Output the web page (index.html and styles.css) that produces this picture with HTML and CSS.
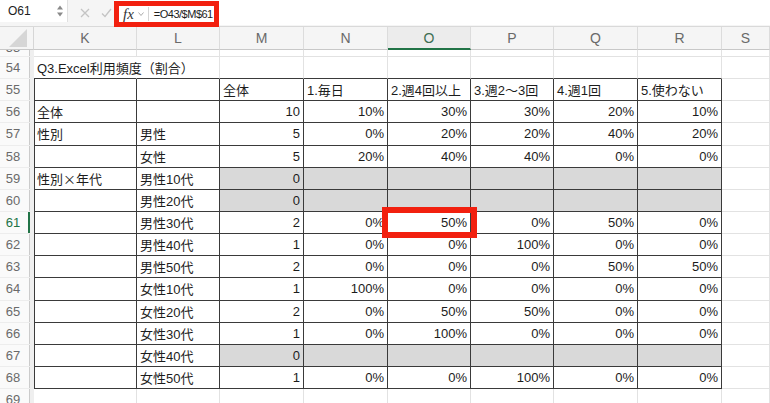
FILE: index.html
```html
<!DOCTYPE html>
<html lang="ja">
<head>
  <meta charset="UTF-8">
  <meta name="viewport" content="width=device-width, initial-scale=1.0">
  <title>Excel利用頻度</title>
  <link rel="stylesheet" href="styles.css">
</head>
<body>

<div class="bar">
  <div class="namebox">
    <span>O61</span>
    <svg class="spin" width="6" height="12" viewBox="0 0 6 12"><path d="M0 4.5 L3 0.5 L6 4.5 Z M0 7.5 L3 11.5 L6 7.5 Z" fill="#8a8a8a"/></svg>
  </div>
  <svg class="btn" width="10" height="10" viewBox="0 0 10 10"><path d="M1 1 L9 9 M9 1 L1 9" stroke="#c4c4c4" stroke-width="1.3"/></svg>
  <svg class="btn" width="11" height="10" viewBox="0 0 11 10"><path d="M1 5.5 L4 8.5 L10 1" stroke="#c4c4c4" stroke-width="1.3" fill="none"/></svg>
  <div class="formula">
    <div class="fx-box">
      <span class="fx">fx</span>
      <svg class="chev" width="6" height="4" viewBox="0 0 6 4"><path d="M0.5 0.5 L3 3.5 L5.5 0.5" stroke="#aaa" fill="none"/></svg>
      <span class="sep"></span>
      <span class="ftext">=O43/$M$61</span>
    </div>
  </div>
</div>

<div class="sheet">
  <!-- 列見出し -->
  <div class="corner"><svg width="18" height="18" viewBox="0 0 18 18"><path d="M18 0 L18 18 L0 18 Z" fill="#d6d6d6"/></svg></div>
  <div class="ch">K</div><div class="ch">L</div><div class="ch">M</div><div class="ch">N</div>
  <div class="ch sel">O</div><div class="ch">P</div><div class="ch">Q</div><div class="ch">R</div><div class="ch">S</div>

  <!-- 53 (半分隠れ) -->
  <div class="rh cut"><span>53</span></div>
  <div class="c"></div><div class="c"></div><div class="c"></div><div class="c"></div><div class="c"></div>
  <div class="c"></div><div class="c"></div><div class="c"></div><div class="c"></div>

  <!-- 54 -->
  <div class="rh">54</div>
  <div class="c tt over">Q3.Excel利用頻度（割合）</div>
  <div class="c tt"></div><div class="c tt"></div><div class="c tt"></div><div class="c tt"></div>
  <div class="c tt"></div><div class="c tt"></div><div class="c tt"></div><div class="c"></div>

  <!-- 55 -->
  <div class="rh">55</div>
  <div class="c t tl"></div><div class="c t"></div><div class="c t">全体</div><div class="c t">1.毎日</div>
  <div class="c t">2.週4回以上</div><div class="c t">3.週2〜3回</div><div class="c t">4.週1回</div><div class="c t">5.使わない</div><div class="c"></div>

  <!-- 56 -->
  <div class="rh">56</div>
  <div class="c t tl">全体</div><div class="c t"></div><div class="c t n">10</div><div class="c t n">10%</div>
  <div class="c t n">30%</div><div class="c t n">30%</div><div class="c t n">20%</div><div class="c t n">10%</div><div class="c"></div>

  <!-- 57 -->
  <div class="rh">57</div>
  <div class="c t tl">性別</div><div class="c t">男性</div><div class="c t n">5</div><div class="c t n">0%</div>
  <div class="c t n">20%</div><div class="c t n">20%</div><div class="c t n">40%</div><div class="c t n">20%</div><div class="c"></div>

  <!-- 58 -->
  <div class="rh">58</div>
  <div class="c t tl"></div><div class="c t">女性</div><div class="c t n">5</div><div class="c t n">20%</div>
  <div class="c t n">40%</div><div class="c t n">40%</div><div class="c t n">0%</div><div class="c t n">0%</div><div class="c"></div>

  <!-- 59 -->
  <div class="rh">59</div>
  <div class="c t tl jp">性別×年代</div><div class="c t">男性10代</div><div class="c t n g">0</div><div class="c t g"></div>
  <div class="c t g"></div><div class="c t g"></div><div class="c t g"></div><div class="c t g"></div><div class="c"></div>

  <!-- 60 -->
  <div class="rh">60</div>
  <div class="c t tl"></div><div class="c t">男性20代</div><div class="c t n g">0</div><div class="c t g"></div>
  <div class="c t g"></div><div class="c t g"></div><div class="c t g"></div><div class="c t g"></div><div class="c"></div>

  <!-- 61 -->
  <div class="rh cur">61</div>
  <div class="c t tl"></div><div class="c t">男性30代</div><div class="c t n">2</div><div class="c t n">0%</div>
  <div class="c t n active">50%<span class="mark"></span></div><div class="c t n">0%</div><div class="c t n">50%</div><div class="c t n">0%</div><div class="c"></div>

  <!-- 62 -->
  <div class="rh">62</div>
  <div class="c t tl"></div><div class="c t">男性40代</div><div class="c t n">1</div><div class="c t n">0%</div>
  <div class="c t n">0%</div><div class="c t n">100%</div><div class="c t n">0%</div><div class="c t n">0%</div><div class="c"></div>

  <!-- 63 -->
  <div class="rh">63</div>
  <div class="c t tl"></div><div class="c t">男性50代</div><div class="c t n">2</div><div class="c t n">0%</div>
  <div class="c t n">0%</div><div class="c t n">0%</div><div class="c t n">50%</div><div class="c t n">50%</div><div class="c"></div>

  <!-- 64 -->
  <div class="rh">64</div>
  <div class="c t tl"></div><div class="c t">女性10代</div><div class="c t n">1</div><div class="c t n">100%</div>
  <div class="c t n">0%</div><div class="c t n">0%</div><div class="c t n">0%</div><div class="c t n">0%</div><div class="c"></div>

  <!-- 65 -->
  <div class="rh">65</div>
  <div class="c t tl"></div><div class="c t">女性20代</div><div class="c t n">2</div><div class="c t n">0%</div>
  <div class="c t n">50%</div><div class="c t n">50%</div><div class="c t n">0%</div><div class="c t n">0%</div><div class="c"></div>

  <!-- 66 -->
  <div class="rh">66</div>
  <div class="c t tl"></div><div class="c t">女性30代</div><div class="c t n">1</div><div class="c t n">0%</div>
  <div class="c t n">100%</div><div class="c t n">0%</div><div class="c t n">0%</div><div class="c t n">0%</div><div class="c"></div>

  <!-- 67 -->
  <div class="rh">67</div>
  <div class="c t tl"></div><div class="c t">女性40代</div><div class="c t n g">0</div><div class="c t g"></div>
  <div class="c t g"></div><div class="c t g"></div><div class="c t g"></div><div class="c t g"></div><div class="c"></div>

  <!-- 68 -->
  <div class="rh">68</div>
  <div class="c t tl"></div><div class="c t">女性50代</div><div class="c t n">1</div><div class="c t n">0%</div>
  <div class="c t n">0%</div><div class="c t n">100%</div><div class="c t n">0%</div><div class="c t n">0%</div><div class="c"></div>

  <!-- 69 -->
  <div class="rh">69</div>
  <div class="c"></div><div class="c"></div><div class="c"></div><div class="c"></div><div class="c"></div>
  <div class="c"></div><div class="c"></div><div class="c"></div><div class="c"></div>
</div>

</body>
</html>
```

FILE: styles.css
```css
body {
  margin: 0;
  font-family: "Liberation Sans", "Noto Sans CJK JP", sans-serif;
  background: #fff;
  color: #1c1c1c;
  overflow: hidden;
  height: 100vh;
}

/* 数式バー */
.bar {
  display: flex;
  align-items: center;
  height: 27px;
  background: #f5f5f5;
  border-bottom: 1px solid #d9d9d9;
  box-sizing: border-box;
}
.namebox {
  display: flex;
  align-items: center;
  justify-content: space-between;
  width: 68px;
  height: 22px;
  padding: 0 4px 0 8px;
  box-sizing: border-box;
  background: #fff;
  border-right: 1px solid #e0e0e0;
  font-size: 12px;
  align-self: flex-start;
}
.btn {
  margin-left: 12px;
}
.btn + .btn {
  margin-left: 11px;
}
.formula {
  flex: 1;
  display: flex;
  align-self: flex-start;
  height: 25px;
  margin-left: 2px;
  background: #fff;
}
.fx-box {
  display: flex;
  align-items: center;
  width: 105px;
  height: 26px;
  margin-top: 1px;
  padding-left: 4px;
  box-sizing: border-box;
  border: 5px solid #f2200f;
  background: #fff;
}
.fx {
  font-family: "Liberation Serif", serif;
  font-style: italic;
  font-size: 15px;
  color: #333;
}
.chev {
  margin-left: 4px;
}
.sep {
  width: 1px;
  height: 14px;
  background: #d4d4d4;
  margin: 0 5px 0 4px;
}
.ftext {
  font-size: 11px;
  letter-spacing: -0.5px;
  white-space: nowrap;
}

/* シート */
.sheet {
  display: grid;
  grid-template-columns: 34px 103px 83px 84px 84px 83px 83px 84px 84px 1fr;
  grid-template-rows: 23px 7px;
  grid-auto-rows: 22.15px;
}
.corner {
  display: flex;
  align-items: flex-end;
  justify-content: flex-end;
  padding: 0 6px 2px 0;
  background: #f5f5f5;
  border-right: 1px solid #d6d6d6;
  border-bottom: 1px solid #c8c8c8;
}
.ch {
  display: flex;
  align-items: center;
  justify-content: center;
  background: #f5f5f5;
  border-right: 1px solid #dcdcdc;
  border-bottom: 1px solid #c8c8c8;
  color: #6a6a6a;
  font-size: 14px;
}
.ch.sel {
  background: #ececec;
  color: #3d6e52;
  border-bottom: 2px solid #217346;
}
.rh {
  display: flex;
  align-items: center;
  justify-content: center;
  padding-right: 4px;
  background: #fafafa;
  border-right: 4px solid #efefef;
  border-bottom: 1px solid #ededed;
  box-shadow: inset -1px 0 #cbcbcb;
  color: #6a6a6a;
  font-size: 13px;
}
.rh.cur {
  color: #217346;
  box-shadow: inset -2px 0 #217346;
}
.rh.cut {
  align-items: flex-start;
  overflow: hidden;
}
.rh.cut span {
  line-height: 13px;
  margin-top: -9px;
}
.c {
  display: flex;
  align-items: center;
  padding: 0 3px;
  border-right: 1px solid #e2e2e2;
  border-bottom: 1px solid #e2e2e2;
  font-size: 13px;
  white-space: nowrap;
  min-width: 0;
}
.jp { font-family: "Noto Sans CJK JP", sans-serif; }
.n { justify-content: flex-end; }
.t {
  border-right-color: #3a3a3a;
  border-bottom-color: #3a3a3a;
}
.tt { border-bottom-color: #3a3a3a; }
.tl { box-shadow: inset 1px 0 #3a3a3a; }
.g { background: #d9d9d9; }
.over { border-right-color: transparent; }

.active {
  position: relative;
}
.mark {
  position: absolute;
  left: -6px;
  top: -5px;
  right: -7px;
  bottom: -5px;
  border: 6px solid #f2200f;
  z-index: 2;
}
```
